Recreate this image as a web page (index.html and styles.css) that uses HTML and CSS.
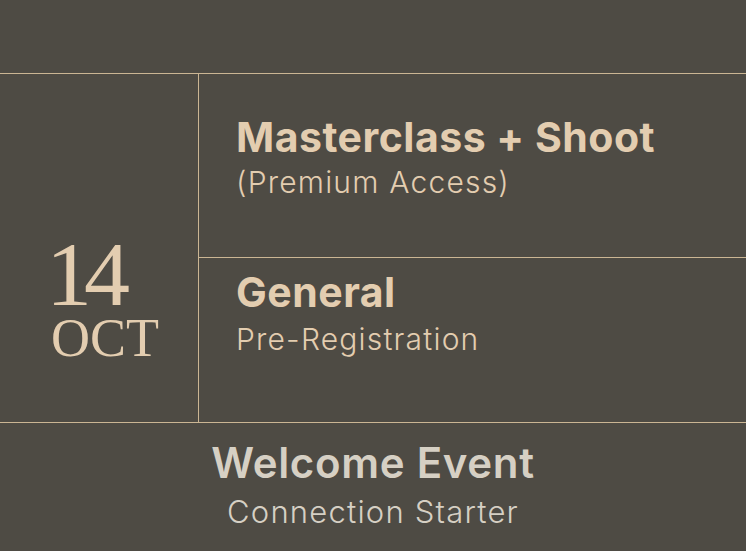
FILE: index.html
```html
<!DOCTYPE html>
<html lang="en">
<head>
<meta charset="utf-8">
<title>Schedule</title>
<link rel="stylesheet" href="styles.css">
</head>
<body>
<main class="page">
  <section class="schedule">
    <div class="date">
      <span class="day">14</span>
      <span class="month">OCT</span>
    </div>
    <div class="sessions">
      <div class="session session-first">
        <h2 class="title">Masterclass + Shoot</h2>
        <p class="sub">(Premium Access)</p>
      </div>
      <div class="session session-second">
        <h2 class="title">General</h2>
        <p class="sub">Pre-Registration</p>
      </div>
    </div>
  </section>
  <section class="welcome">
    <h2 class="welcome-title">Welcome Event</h2>
    <p class="welcome-sub">Connection Starter</p>
  </section>
</main>
</body>
</html>
```
FILE: styles.css
```css
* { box-sizing: border-box; }
html, body {
  margin: 0;
  padding: 0;
  background: #4e4b44;
  height: 100%;
  overflow: hidden;
}
body {
  font-family: "Inter", "Liberation Sans", sans-serif;
  color: #e3cdb0;
}
.page {
  padding-top: 73px;
}
.schedule {
  display: grid;
  grid-template-columns: 199px 1fr;
  border-top: 1px solid #cbb694;
  border-bottom: 1px solid #cbb694;
}
.date {
  border-right: 1px solid #cbb694;
  display: flex;
  flex-direction: column;
  align-items: flex-start;
  padding-top: 160px;
  padding-left: 51px;
  font-family: "Liberation Serif", "DejaVu Serif", serif;
  color: #e3cdb0;
}
.day {
  font-size: 92px;
  line-height: 80px;
  letter-spacing: -8px;
  margin-left: -5px;
}
.month {
  font-size: 54px;
  line-height: 48px;
}
.sessions {
  display: flex;
  flex-direction: column;
}
.session {
  padding-left: 37px;
}
.session-first {
  height: 184px;
  padding-top: 39px;
  border-bottom: 1px solid #cbb694;
}
.session-second {
  height: 164px;
  padding-top: 10px;
}
.title {
  margin: 0;
  font-size: 41px;
  line-height: 48px;
  font-weight: 700;
  letter-spacing: 0.5px;
}
.sub {
  margin: 3px 0 0;
  font-size: 30px;
  line-height: 36px;
  font-weight: 300;
  letter-spacing: 1.2px;
}
.session-second .sub { margin-top: 5px; }
.welcome {
  text-align: center;
  padding-top: 15px;
  color: #d6d0c4;
}
.welcome-title {
  margin: 0;
  font-size: 42px;
  line-height: 50px;
  font-weight: 600;
  letter-spacing: 0.7px;
}
.welcome-sub {
  margin: 5px 0 0;
  font-size: 31px;
  line-height: 38px;
  font-weight: 300;
  letter-spacing: 1.2px;
}
```
